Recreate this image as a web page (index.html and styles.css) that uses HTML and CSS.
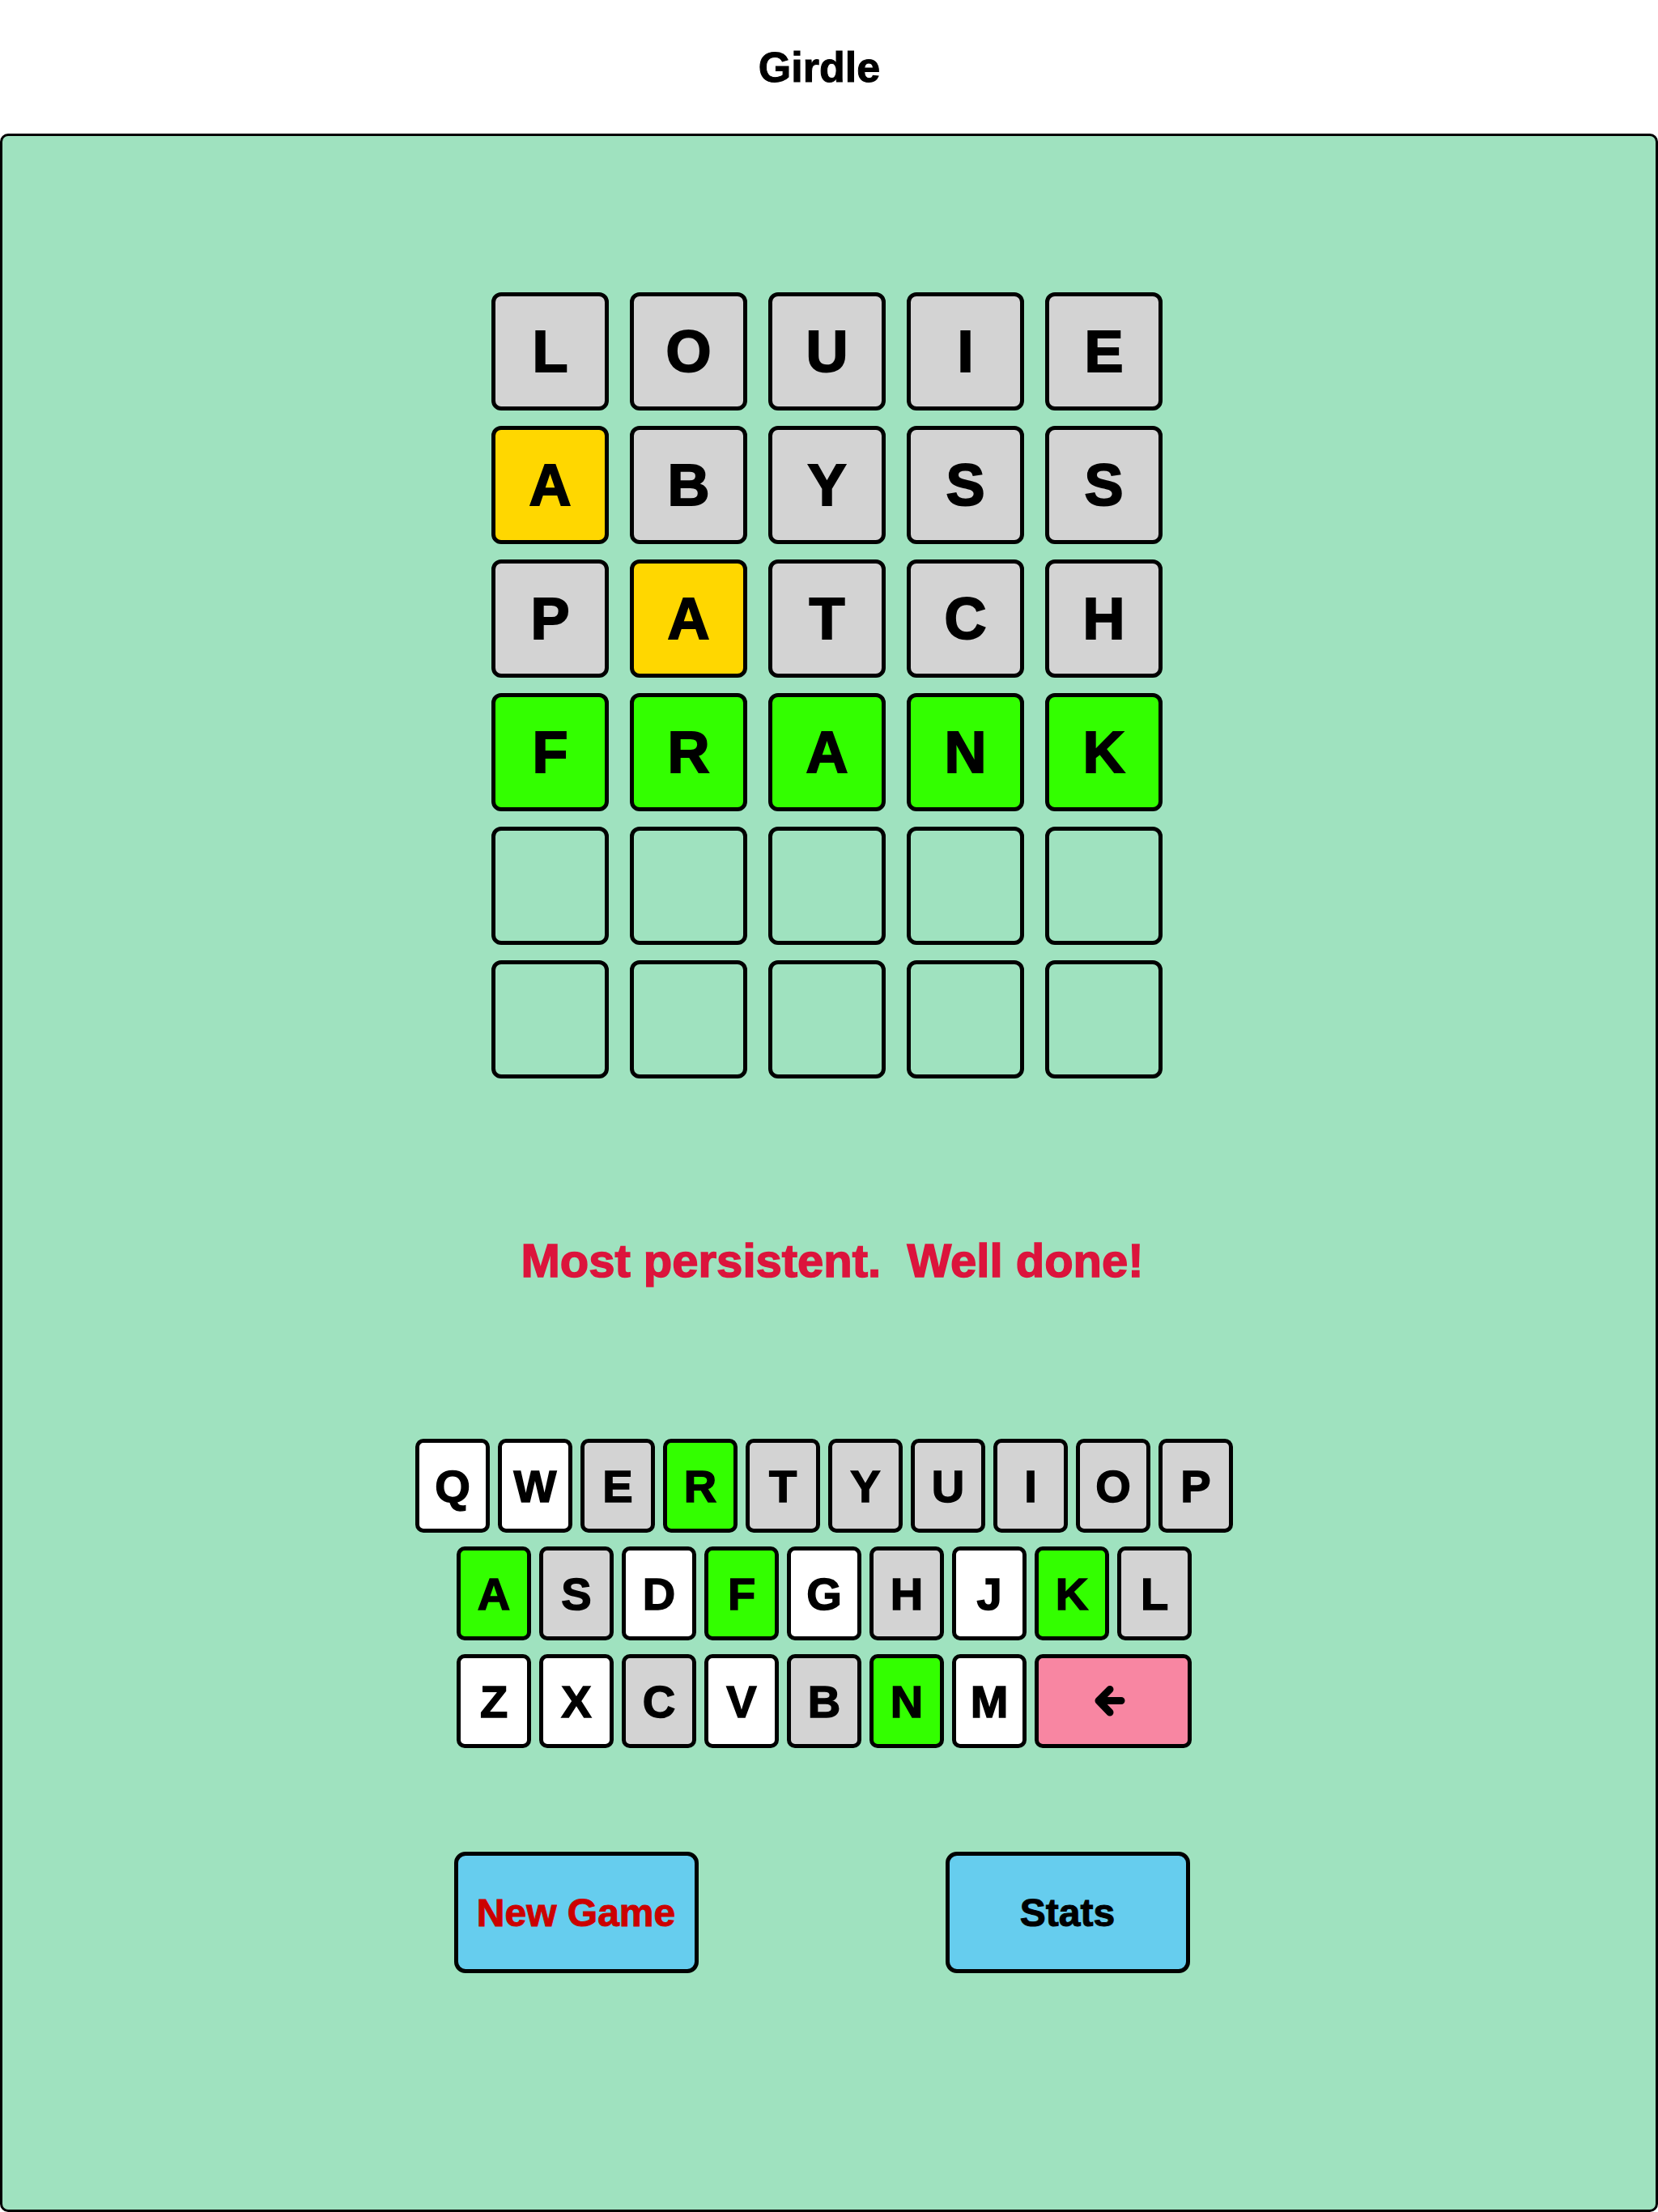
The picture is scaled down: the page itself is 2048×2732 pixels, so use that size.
FILE: index.html
```html
<!DOCTYPE html>
<html lang="en">
<head>
<meta charset="utf-8">
<title>Girdle</title>
<link rel="stylesheet" href="styles.css">
</head>
<body>
<header class="header"><h1 class="title">Girdle</h1></header>
<main class="panel">
  <div class="grid">
    <div class="row">
      <div class="tile miss">L</div><div class="tile miss">O</div><div class="tile miss">U</div><div class="tile miss">I</div><div class="tile miss">E</div>
    </div>
    <div class="row">
      <div class="tile near">A</div><div class="tile miss">B</div><div class="tile miss">Y</div><div class="tile miss">S</div><div class="tile miss">S</div>
    </div>
    <div class="row">
      <div class="tile miss">P</div><div class="tile near">A</div><div class="tile miss">T</div><div class="tile miss">C</div><div class="tile miss">H</div>
    </div>
    <div class="row">
      <div class="tile hit">F</div><div class="tile hit">R</div><div class="tile hit">A</div><div class="tile hit">N</div><div class="tile hit">K</div>
    </div>
    <div class="row">
      <div class="tile"></div><div class="tile"></div><div class="tile"></div><div class="tile"></div><div class="tile"></div>
    </div>
    <div class="row">
      <div class="tile"></div><div class="tile"></div><div class="tile"></div><div class="tile"></div><div class="tile"></div>
    </div>
  </div>

  <p class="message">Most persistent.&nbsp; Well done!</p>

  <div class="keyboard">
    <div class="krow">
      <button class="key">Q</button><button class="key">W</button><button class="key miss">E</button><button class="key hit">R</button><button class="key miss">T</button><button class="key miss">Y</button><button class="key miss">U</button><button class="key miss">I</button><button class="key miss">O</button><button class="key miss">P</button>
    </div>
    <div class="krow">
      <button class="key hit">A</button><button class="key miss">S</button><button class="key">D</button><button class="key hit">F</button><button class="key">G</button><button class="key miss">H</button><button class="key">J</button><button class="key hit">K</button><button class="key miss">L</button>
    </div>
    <div class="krow">
      <button class="key">Z</button><button class="key">X</button><button class="key miss">C</button><button class="key">V</button><button class="key miss">B</button><button class="key hit">N</button><button class="key">M</button>
      <button class="key back" aria-label="Backspace">
        <svg class="back-icon" viewBox="0 0 44 44" width="44" height="44" aria-hidden="true">
          <path d="M36 21.5 H8 M22 7.5 L8 21.5 L22 36" fill="none" stroke="#000" stroke-width="9" stroke-linecap="round" stroke-linejoin="round"/>
        </svg>
      </button>
    </div>
  </div>

  <div class="actions">
    <button class="action new-game">New Game</button>
    <button class="action stats">Stats</button>
  </div>
</main>
</body>
</html>
```

FILE: styles.css
```css
* { box-sizing: border-box; }

html, body {
  margin: 0;
  padding: 0;
  background: #ffffff;
  font-family: "Liberation Sans", Arial, Helvetica, sans-serif;
  color: #000;
}

.header {
  height: 165px;
  display: flex;
  align-items: center;
  justify-content: center;
  padding-right: 24px;
}

.title {
  margin: 0;
  font-size: 52px;
  font-weight: 700;
  line-height: normal;
  -webkit-text-stroke: 1px #000;
}

.panel {
  height: 2567px;
  background: #9fe2bf;
  border: 3px solid #000;
  border-radius: 10px;
  display: flex;
  flex-direction: column;
  align-items: center;
  padding-top: 193px;
}

.grid {
  display: flex;
  flex-direction: column;
  gap: 19px;
  margin-right: 5px;
}

.row {
  display: flex;
  gap: 26px;
}

.tile {
  width: 145px;
  height: 146px;
  border: 5px solid #000;
  border-radius: 12px;
  display: flex;
  align-items: center;
  justify-content: center;
  font-size: 72px;
  font-weight: 700;
  -webkit-text-stroke: 2px #000;
}

.tile.miss { background: #d3d3d3; }
.tile.near { background: #ffd700; }
.tile.hit { background: #33ff00; }

.message {
  margin: 196px 0 0 0;
  font-size: 58px;
  line-height: 1;
  font-weight: 700;
  color: #dc143c;
  -webkit-text-stroke: 1.5px #dc143c;
  white-space: nowrap;
  padding-left: 8px;
}

.keyboard {
  margin-top: 191px;
  display: flex;
  flex-direction: column;
  align-items: center;
  gap: 17px;
  margin-right: 12px;
}

.krow {
  display: flex;
  gap: 10px;
}

.key {
  width: 92px;
  height: 116px;
  padding: 0;
  margin: 0;
  border: 5px solid #000;
  border-radius: 10px;
  background: #ffffff;
  color: #000;
  font-family: "Liberation Sans", Arial, Helvetica, sans-serif;
  font-size: 56px;
  font-weight: 700;
  -webkit-text-stroke: 1.5px #000;
  display: flex;
  align-items: center;
  justify-content: center;
}

.key.miss { background: #d3d3d3; }
.key.hit { background: #33ff00; }

.key.back {
  width: 194px;
  background: #f886a2;
  padding-right: 8px;
}

.back-icon { display: block; }

.actions {
  margin-top: 128px;
  display: flex;
  gap: 305px;
  margin-right: 18px;
}

.action {
  width: 302px;
  height: 150px;
  border: 5px solid #000;
  border-radius: 14px;
  background: #66cdee;
  font-family: "Liberation Sans", Arial, Helvetica, sans-serif;
  font-size: 48px;
  font-weight: 700;
  padding: 0;
  color: #000;
  -webkit-text-stroke: 1px #000;
}

.action.new-game { color: #cc0000; -webkit-text-stroke: 1px #cc0000; }
```
